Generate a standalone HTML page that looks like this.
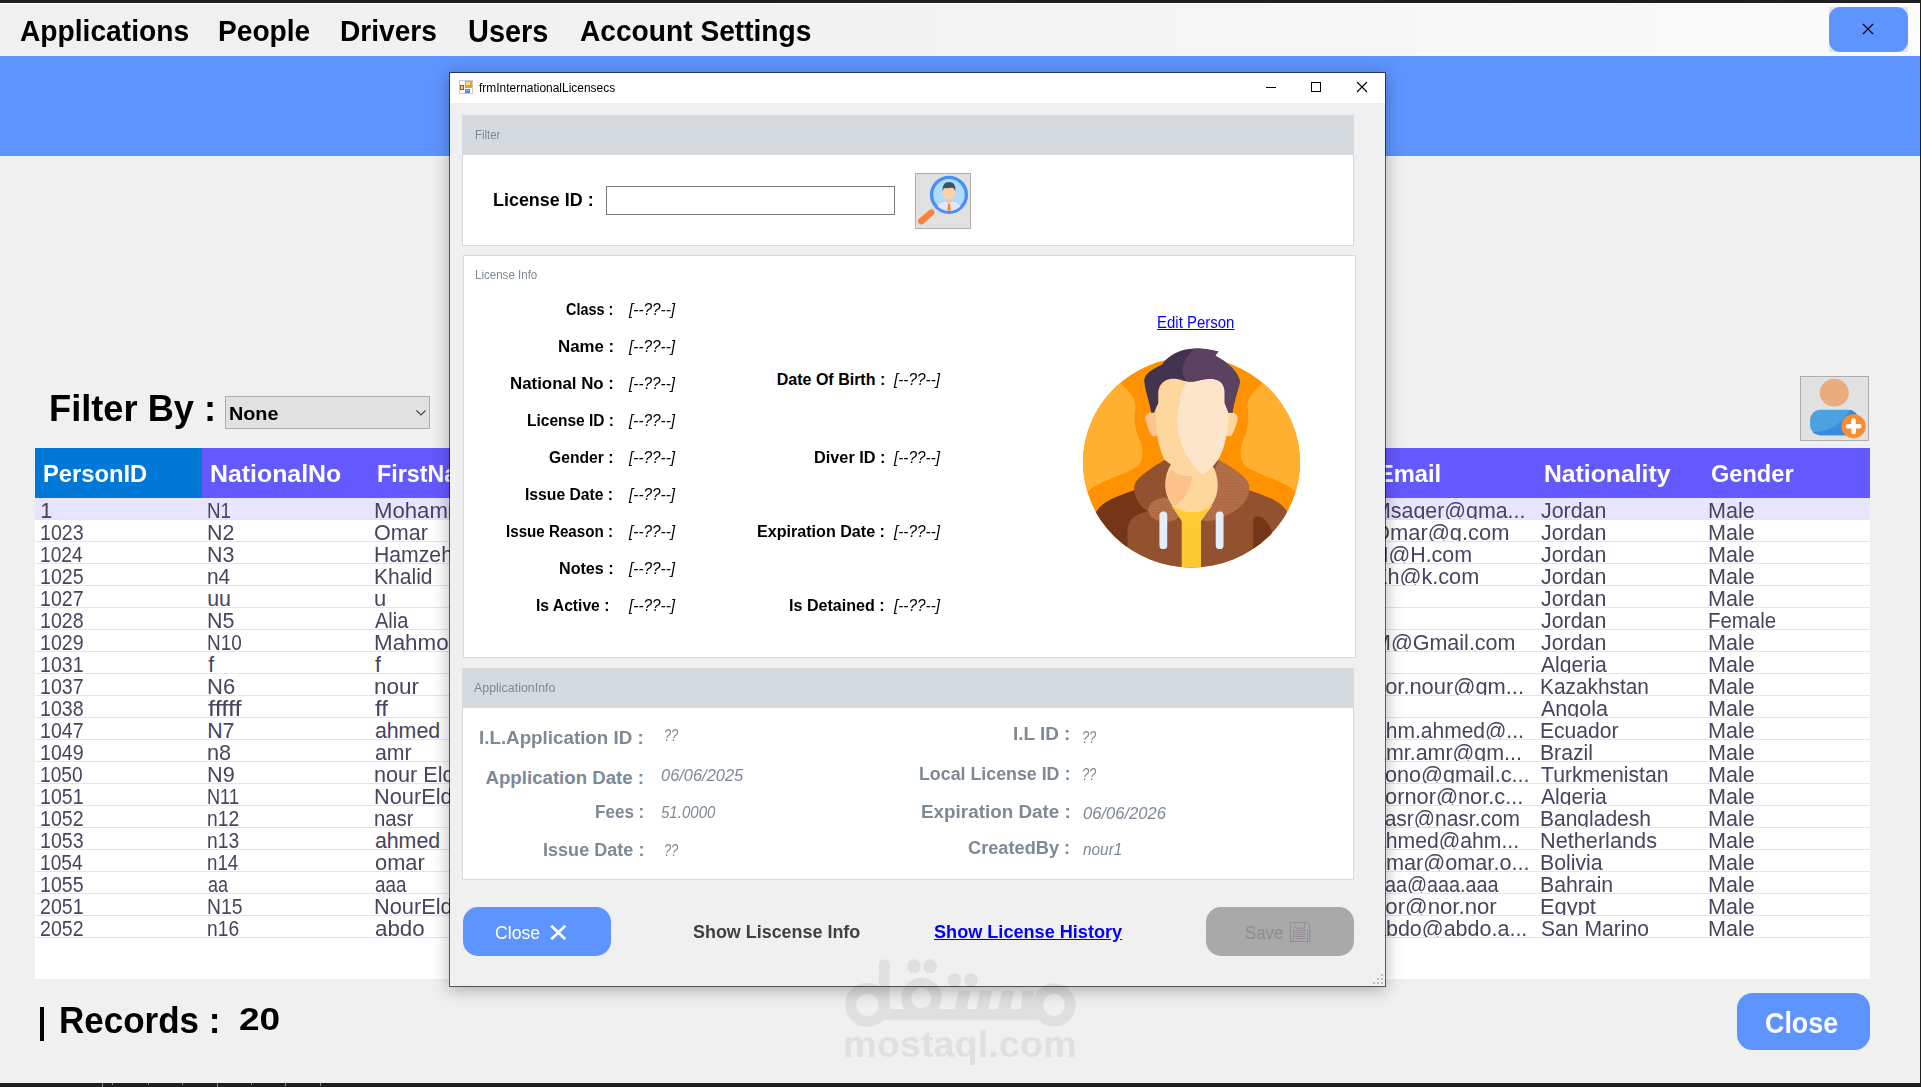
<!DOCTYPE html>
<html><head><meta charset="utf-8"><title>frmInternationalLicensecs</title>
<style>
html,body{margin:0;padding:0;}
body{width:1921px;height:1087px;overflow:hidden;position:relative;background:#f0f0f0;font-family:"Liberation Sans",sans-serif;}
.a{position:absolute;}
.t{position:absolute;white-space:pre;transform-origin:0 50%;}
.row{position:absolute;left:35px;width:1835px;height:22px;overflow:hidden;box-sizing:border-box;border-bottom:1px solid #e4e1fb;}
</style></head>
<body>
<!-- ===== main form ===== -->
<div class="a" style="left:0;top:0;width:1921px;height:3px;background:#1f1f1f"></div>
<div class="a" style="left:0;top:3px;width:1920px;height:53px;background:linear-gradient(90deg,#f0f0f0 0%,#f2f2f2 40%,#fbfbfb 100%);border-top:1px solid #fff;box-sizing:border-box"></div>
<div class="a" style="left:0;top:56px;width:1920px;height:100px;background:#5e94ff"></div>
<div class="a" style="left:1920px;top:0;width:1px;height:1087px;background:#1f1f1f"></div>
<div class="a" style="left:0;top:1083px;width:1921px;height:4px;background:#1f1f1f"></div>
<div class="a" style="left:102px;top:1083px;width:1px;height:4px;background:#8a8a8a"></div><div class="a" style="left:112px;top:1083px;width:1px;height:2px;background:#8a8a8a"></div><div class="a" style="left:148px;top:1083px;width:1px;height:2px;background:#8a8a8a"></div><div class="a" style="left:182px;top:1083px;width:1px;height:2px;background:#8a8a8a"></div><div class="a" style="left:217px;top:1083px;width:1px;height:4px;background:#8a8a8a"></div><div class="a" style="left:251px;top:1083px;width:1px;height:2px;background:#8a8a8a"></div><div class="a" style="left:285px;top:1083px;width:1px;height:3px;background:#8a8a8a"></div><div class="a" style="left:320px;top:1083px;width:1px;height:3px;background:#8a8a8a"></div>
<!-- top close button -->
<div class="a" style="left:1829px;top:7px;width:79px;height:45px;background:#e6e6e6"></div>
<div class="a" style="left:1829px;top:7px;width:79px;height:45px;background:#5e94ff;border-radius:11px"></div>
<svg class="a" style="left:1862px;top:23px" width="12" height="12" viewBox="0 0 12 12"><path d="M1 1 L11 11 M11 1 L1 11" stroke="#000" stroke-width="1.2" fill="none"/></svg>
<!-- combo -->
<div class="a" style="left:225px;top:396px;width:205px;height:33px;background:#e1e1e1;border:1px solid #adadad;box-sizing:border-box"></div>
<svg class="a" style="left:415px;top:409px" width="12" height="8" viewBox="0 0 12 8"><path d="M1.5 1.5 L6 6 L10.5 1.5" stroke="#444" stroke-width="1.2" fill="none"/></svg>
<!-- add person button -->
<div class="a" style="left:1800px;top:376px;width:69px;height:65px;background:#e1e1e1;border:1px solid #adadad;box-sizing:border-box"></div>
<svg class="a" style="left:1800px;top:376px" width="69" height="65" viewBox="1800 376 69 65">
<defs><clipPath id="bodyc"><rect x="1810.1" y="409.7" width="48.3" height="25.5" rx="10"/></clipPath></defs>
<ellipse cx="1834.3" cy="392.65" rx="14.6" ry="13.8" fill="#e9ad7d"/>
<rect x="1810.1" y="409.7" width="48.3" height="25.5" rx="10" fill="#4aa3df"/>
<path d="M1812 432 C1830 432 1845 422 1850 409 L1860 409 L1860 437 L1812 437 Z" fill="#3b8adb" clip-path="url(#bodyc)"/>
<circle cx="1853.6" cy="426.3" r="12.1" fill="#f98d34"/>
<path d="M1853.6 420.6 V432 M1847.9 426.3 H1859.3" stroke="#fff" stroke-width="4.6" stroke-linecap="round"/>
</svg>
<!-- grid -->
<div class="a" style="left:35px;top:448px;width:1835px;height:531px;background:#fff"></div>
<div class="a" style="left:35px;top:448px;width:1835px;height:50px;background:#6458ff"></div>
<div class="a" style="left:35px;top:448px;width:167px;height:50px;background:#0078d7"></div>
<div class="row" style="top:498px;background:#e7e5ff"><span class="t" style="left:5.20px;top:1.00px;font-size:21.33px;line-height:24px;color:#47455e;">1</span>
<span class="t" style="left:172.32px;top:1.00px;font-size:21.33px;line-height:24px;color:#47455e;transform:scaleX(0.8818);">N1</span>
<span class="t" style="left:338.86px;top:1.00px;font-size:21.33px;line-height:24px;color:#47455e;transform:scaleX(1.0393);">Mohammed</span>
<span class="t" style="left:1338.00px;top:1.00px;font-size:21.33px;line-height:24px;color:#47455e;transform:scaleX(1.0026);">Msaqer@gma...</span>
<span class="t" style="left:1506.30px;top:1.00px;font-size:21.33px;line-height:24px;color:#47455e;transform:scaleX(1.0023);">Jordan</span>
<span class="t" style="left:1672.99px;top:1.00px;font-size:21.33px;line-height:24px;color:#47455e;transform:scaleX(1.0098);">Male</span></div>
<div class="row" style="top:520px;background:#fff"><span class="t" style="left:5.28px;top:1.00px;font-size:21.33px;line-height:24px;color:#47455e;transform:scaleX(0.9170);">1023</span>
<span class="t" style="left:172.20px;top:1.00px;font-size:21.33px;line-height:24px;color:#47455e;transform:scaleX(1.0038);">N2</span>
<span class="t" style="left:338.89px;top:1.00px;font-size:21.33px;line-height:24px;color:#47455e;transform:scaleX(1.0111);">Omar</span>
<span class="t" style="left:1337.97px;top:1.00px;font-size:21.33px;line-height:24px;color:#47455e;transform:scaleX(1.0253);">Omar@g.com</span>
<span class="t" style="left:1506.30px;top:1.00px;font-size:21.33px;line-height:24px;color:#47455e;transform:scaleX(1.0023);">Jordan</span>
<span class="t" style="left:1672.99px;top:1.00px;font-size:21.33px;line-height:24px;color:#47455e;transform:scaleX(1.0098);">Male</span></div>
<div class="row" style="top:542px;background:#fff"><span class="t" style="left:5.30px;top:1.00px;font-size:21.33px;line-height:24px;color:#47455e;transform:scaleX(0.8973);">1024</span>
<span class="t" style="left:172.20px;top:1.00px;font-size:21.33px;line-height:24px;color:#47455e;transform:scaleX(1.0038);">N3</span>
<span class="t" style="left:338.91px;top:1.00px;font-size:21.33px;line-height:24px;color:#47455e;transform:scaleX(0.9941);">Hamzeh</span>
<span class="t" style="left:1338.00px;top:1.00px;font-size:21.33px;line-height:24px;color:#47455e;transform:scaleX(1.0041);">H@H.com</span>
<span class="t" style="left:1506.30px;top:1.00px;font-size:21.33px;line-height:24px;color:#47455e;transform:scaleX(1.0023);">Jordan</span>
<span class="t" style="left:1672.99px;top:1.00px;font-size:21.33px;line-height:24px;color:#47455e;transform:scaleX(1.0098);">Male</span></div>
<div class="row" style="top:564px;background:#fff"><span class="t" style="left:5.28px;top:1.00px;font-size:21.33px;line-height:24px;color:#47455e;transform:scaleX(0.9170);">1025</span>
<span class="t" style="left:172.22px;top:1.00px;font-size:21.33px;line-height:24px;color:#47455e;transform:scaleX(0.9798);">n4</span>
<span class="t" style="left:338.91px;top:1.00px;font-size:21.33px;line-height:24px;color:#47455e;transform:scaleX(0.9874);">Khalid</span>
<span class="t" style="left:1337.98px;top:1.00px;font-size:21.33px;line-height:24px;color:#47455e;transform:scaleX(1.0150);">Kh@k.com</span>
<span class="t" style="left:1506.30px;top:1.00px;font-size:21.33px;line-height:24px;color:#47455e;transform:scaleX(1.0023);">Jordan</span>
<span class="t" style="left:1672.99px;top:1.00px;font-size:21.33px;line-height:24px;color:#47455e;transform:scaleX(1.0098);">Male</span></div>
<div class="row" style="top:586px;background:#fff"><span class="t" style="left:5.28px;top:1.00px;font-size:21.33px;line-height:24px;color:#47455e;transform:scaleX(0.9170);">1027</span>
<span class="t" style="left:172.20px;top:1.00px;font-size:21.33px;line-height:24px;color:#47455e;">uu</span>
<span class="t" style="left:338.87px;top:1.00px;font-size:21.33px;line-height:24px;color:#47455e;transform:scaleX(1.0300);">u</span>
<span class="t" style="left:1506.30px;top:1.00px;font-size:21.33px;line-height:24px;color:#47455e;transform:scaleX(1.0023);">Jordan</span>
<span class="t" style="left:1672.99px;top:1.00px;font-size:21.33px;line-height:24px;color:#47455e;transform:scaleX(1.0098);">Male</span></div>
<div class="row" style="top:608px;background:#fff"><span class="t" style="left:5.28px;top:1.00px;font-size:21.33px;line-height:24px;color:#47455e;transform:scaleX(0.9170);">1028</span>
<span class="t" style="left:172.20px;top:1.00px;font-size:21.33px;line-height:24px;color:#47455e;transform:scaleX(1.0038);">N5</span>
<span class="t" style="left:339.90px;top:1.00px;font-size:21.33px;line-height:24px;color:#47455e;transform:scaleX(0.9383);">Alia</span>
<span class="t" style="left:1506.30px;top:1.00px;font-size:21.33px;line-height:24px;color:#47455e;transform:scaleX(1.0023);">Jordan</span>
<span class="t" style="left:1673.04px;top:1.00px;font-size:21.33px;line-height:24px;color:#47455e;transform:scaleX(0.9573);">Female</span></div>
<div class="row" style="top:630px;background:#fff"><span class="t" style="left:5.28px;top:1.00px;font-size:21.33px;line-height:24px;color:#47455e;transform:scaleX(0.9170);">1029</span>
<span class="t" style="left:172.31px;top:1.00px;font-size:21.33px;line-height:24px;color:#47455e;transform:scaleX(0.8886);">N10</span>
<span class="t" style="left:338.85px;top:1.00px;font-size:21.33px;line-height:24px;color:#47455e;transform:scaleX(1.0486);">Mahmoud</span>
<span class="t" style="left:1337.99px;top:1.00px;font-size:21.33px;line-height:24px;color:#47455e;transform:scaleX(1.0081);">M@Gmail.com</span>
<span class="t" style="left:1506.30px;top:1.00px;font-size:21.33px;line-height:24px;color:#47455e;transform:scaleX(1.0023);">Jordan</span>
<span class="t" style="left:1672.99px;top:1.00px;font-size:21.33px;line-height:24px;color:#47455e;transform:scaleX(1.0098);">Male</span></div>
<div class="row" style="top:652px;background:#fff"><span class="t" style="left:5.28px;top:1.00px;font-size:21.33px;line-height:24px;color:#47455e;transform:scaleX(0.9170);">1031</span>
<span class="t" style="left:173.20px;top:1.00px;font-size:21.33px;line-height:24px;color:#47455e;">f</span>
<span class="t" style="left:339.90px;top:1.00px;font-size:21.33px;line-height:24px;color:#47455e;">f</span>
<span class="t" style="left:1506.30px;top:1.00px;font-size:21.33px;line-height:24px;color:#47455e;transform:scaleX(0.9921);">Algeria</span>
<span class="t" style="left:1672.99px;top:1.00px;font-size:21.33px;line-height:24px;color:#47455e;transform:scaleX(1.0098);">Male</span></div>
<div class="row" style="top:674px;background:#fff"><span class="t" style="left:5.28px;top:1.00px;font-size:21.33px;line-height:24px;color:#47455e;transform:scaleX(0.9170);">1037</span>
<span class="t" style="left:172.16px;top:1.00px;font-size:21.33px;line-height:24px;color:#47455e;transform:scaleX(1.0353);">N6</span>
<span class="t" style="left:338.84px;top:1.00px;font-size:21.33px;line-height:24px;color:#47455e;transform:scaleX(1.0557);">nour</span>
<span class="t" style="left:1337.98px;top:1.00px;font-size:21.33px;line-height:24px;color:#47455e;transform:scaleX(1.0250);">nor.nour@gm...</span>
<span class="t" style="left:1505.32px;top:1.00px;font-size:21.33px;line-height:24px;color:#47455e;transform:scaleX(0.9773);">Kazakhstan</span>
<span class="t" style="left:1672.99px;top:1.00px;font-size:21.33px;line-height:24px;color:#47455e;transform:scaleX(1.0098);">Male</span></div>
<div class="row" style="top:696px;background:#fff"><span class="t" style="left:5.28px;top:1.00px;font-size:21.33px;line-height:24px;color:#47455e;transform:scaleX(0.9170);">1038</span>
<span class="t" style="left:173.20px;top:1.00px;font-size:21.33px;line-height:24px;color:#47455e;transform:scaleX(1.1967);">fffff</span>
<span class="t" style="left:339.90px;top:1.00px;font-size:21.33px;line-height:24px;color:#47455e;transform:scaleX(1.1265);">ff</span>
<span class="t" style="left:1506.30px;top:1.00px;font-size:21.33px;line-height:24px;color:#47455e;transform:scaleX(1.0098);">Angola</span>
<span class="t" style="left:1672.99px;top:1.00px;font-size:21.33px;line-height:24px;color:#47455e;transform:scaleX(1.0098);">Male</span></div>
<div class="row" style="top:718px;background:#fff"><span class="t" style="left:5.28px;top:1.00px;font-size:21.33px;line-height:24px;color:#47455e;transform:scaleX(0.9170);">1047</span>
<span class="t" style="left:172.20px;top:1.00px;font-size:21.33px;line-height:24px;color:#47455e;">N7</span>
<span class="t" style="left:339.90px;top:1.00px;font-size:21.33px;line-height:24px;color:#47455e;">ahmed</span>
<span class="t" style="left:1339.00px;top:1.00px;font-size:21.33px;line-height:24px;color:#47455e;transform:scaleX(0.9858);">ahm.ahmed@...</span>
<span class="t" style="left:1505.31px;top:1.00px;font-size:21.33px;line-height:24px;color:#47455e;transform:scaleX(0.9893);">Ecuador</span>
<span class="t" style="left:1672.99px;top:1.00px;font-size:21.33px;line-height:24px;color:#47455e;transform:scaleX(1.0098);">Male</span></div>
<div class="row" style="top:740px;background:#fff"><span class="t" style="left:5.28px;top:1.00px;font-size:21.33px;line-height:24px;color:#47455e;transform:scaleX(0.9170);">1049</span>
<span class="t" style="left:172.18px;top:1.00px;font-size:21.33px;line-height:24px;color:#47455e;transform:scaleX(1.0155);">n8</span>
<span class="t" style="left:339.90px;top:1.00px;font-size:21.33px;line-height:24px;color:#47455e;transform:scaleX(0.9965);">amr</span>
<span class="t" style="left:1339.00px;top:1.00px;font-size:21.33px;line-height:24px;color:#47455e;transform:scaleX(1.0045);">amr.amr@gm...</span>
<span class="t" style="left:1505.31px;top:1.00px;font-size:21.33px;line-height:24px;color:#47455e;transform:scaleX(0.9924);">Brazil</span>
<span class="t" style="left:1672.99px;top:1.00px;font-size:21.33px;line-height:24px;color:#47455e;transform:scaleX(1.0098);">Male</span></div>
<div class="row" style="top:762px;background:#fff"><span class="t" style="left:5.30px;top:1.00px;font-size:21.33px;line-height:24px;color:#47455e;transform:scaleX(0.8973);">1050</span>
<span class="t" style="left:172.18px;top:1.00px;font-size:21.33px;line-height:24px;color:#47455e;transform:scaleX(1.0156);">N9</span>
<span class="t" style="left:338.88px;top:1.00px;font-size:21.33px;line-height:24px;color:#47455e;transform:scaleX(1.0151);">nour Eldin</span>
<span class="t" style="left:1337.99px;top:1.00px;font-size:21.33px;line-height:24px;color:#47455e;transform:scaleX(1.0132);">nono@gmail.c...</span>
<span class="t" style="left:1506.30px;top:1.00px;font-size:21.33px;line-height:24px;color:#47455e;transform:scaleX(0.9934);">Turkmenistan</span>
<span class="t" style="left:1672.99px;top:1.00px;font-size:21.33px;line-height:24px;color:#47455e;transform:scaleX(1.0098);">Male</span></div>
<div class="row" style="top:784px;background:#fff"><span class="t" style="left:5.28px;top:1.00px;font-size:21.33px;line-height:24px;color:#47455e;transform:scaleX(0.9170);">1051</span>
<span class="t" style="left:172.35px;top:1.00px;font-size:21.33px;line-height:24px;color:#47455e;transform:scaleX(0.8520);">N11</span>
<span class="t" style="left:338.88px;top:1.00px;font-size:21.33px;line-height:24px;color:#47455e;transform:scaleX(1.0208);">NourEldin</span>
<span class="t" style="left:1337.98px;top:1.00px;font-size:21.33px;line-height:24px;color:#47455e;transform:scaleX(1.0201);">nornor@nor.c...</span>
<span class="t" style="left:1506.30px;top:1.00px;font-size:21.33px;line-height:24px;color:#47455e;transform:scaleX(0.9921);">Algeria</span>
<span class="t" style="left:1672.99px;top:1.00px;font-size:21.33px;line-height:24px;color:#47455e;transform:scaleX(1.0098);">Male</span></div>
<div class="row" style="top:806px;background:#fff"><span class="t" style="left:5.28px;top:1.00px;font-size:21.33px;line-height:24px;color:#47455e;transform:scaleX(0.9170);">1052</span>
<span class="t" style="left:172.30px;top:1.00px;font-size:21.33px;line-height:24px;color:#47455e;transform:scaleX(0.9015);">n12</span>
<span class="t" style="left:338.95px;top:1.00px;font-size:21.33px;line-height:24px;color:#47455e;transform:scaleX(0.9533);">nasr</span>
<span class="t" style="left:1338.02px;top:1.00px;font-size:21.33px;line-height:24px;color:#47455e;transform:scaleX(0.9824);">nasr@nasr.com</span>
<span class="t" style="left:1505.32px;top:1.00px;font-size:21.33px;line-height:24px;color:#47455e;transform:scaleX(0.9847);">Bangladesh</span>
<span class="t" style="left:1672.99px;top:1.00px;font-size:21.33px;line-height:24px;color:#47455e;transform:scaleX(1.0098);">Male</span></div>
<div class="row" style="top:828px;background:#fff"><span class="t" style="left:5.28px;top:1.00px;font-size:21.33px;line-height:24px;color:#47455e;transform:scaleX(0.9170);">1053</span>
<span class="t" style="left:172.30px;top:1.00px;font-size:21.33px;line-height:24px;color:#47455e;transform:scaleX(0.9015);">n13</span>
<span class="t" style="left:339.90px;top:1.00px;font-size:21.33px;line-height:24px;color:#47455e;">ahmed</span>
<span class="t" style="left:1339.00px;top:1.00px;font-size:21.33px;line-height:24px;color:#47455e;transform:scaleX(0.9930);">ahmed@ahm...</span>
<span class="t" style="left:1505.28px;top:1.00px;font-size:21.33px;line-height:24px;color:#47455e;transform:scaleX(1.0173);">Netherlands</span>
<span class="t" style="left:1672.99px;top:1.00px;font-size:21.33px;line-height:24px;color:#47455e;transform:scaleX(1.0098);">Male</span></div>
<div class="row" style="top:850px;background:#fff"><span class="t" style="left:5.30px;top:1.00px;font-size:21.33px;line-height:24px;color:#47455e;transform:scaleX(0.8973);">1054</span>
<span class="t" style="left:172.32px;top:1.00px;font-size:21.33px;line-height:24px;color:#47455e;transform:scaleX(0.8755);">n14</span>
<span class="t" style="left:339.90px;top:1.00px;font-size:21.33px;line-height:24px;color:#47455e;transform:scaleX(1.0229);">omar</span>
<span class="t" style="left:1339.00px;top:1.00px;font-size:21.33px;line-height:24px;color:#47455e;transform:scaleX(1.0146);">omar@omar.o...</span>
<span class="t" style="left:1505.30px;top:1.00px;font-size:21.33px;line-height:24px;color:#47455e;transform:scaleX(0.9973);">Bolivia</span>
<span class="t" style="left:1672.99px;top:1.00px;font-size:21.33px;line-height:24px;color:#47455e;transform:scaleX(1.0098);">Male</span></div>
<div class="row" style="top:872px;background:#fff"><span class="t" style="left:5.28px;top:1.00px;font-size:21.33px;line-height:24px;color:#47455e;transform:scaleX(0.9170);">1055</span>
<span class="t" style="left:173.20px;top:1.00px;font-size:21.33px;line-height:24px;color:#47455e;transform:scaleX(0.8424);">aa</span>
<span class="t" style="left:339.90px;top:1.00px;font-size:21.33px;line-height:24px;color:#47455e;transform:scaleX(0.8818);">aaa</span>
<span class="t" style="left:1339.00px;top:1.00px;font-size:21.33px;line-height:24px;color:#47455e;transform:scaleX(0.9273);">aaa@aaa.aaa</span>
<span class="t" style="left:1505.30px;top:1.00px;font-size:21.33px;line-height:24px;color:#47455e;transform:scaleX(0.9951);">Bahrain</span>
<span class="t" style="left:1672.99px;top:1.00px;font-size:21.33px;line-height:24px;color:#47455e;transform:scaleX(1.0098);">Male</span></div>
<div class="row" style="top:894px;background:#fff"><span class="t" style="left:5.28px;top:1.00px;font-size:21.33px;line-height:24px;color:#47455e;transform:scaleX(0.9170);">2051</span>
<span class="t" style="left:172.30px;top:1.00px;font-size:21.33px;line-height:24px;color:#47455e;transform:scaleX(0.9044);">N15</span>
<span class="t" style="left:338.88px;top:1.00px;font-size:21.33px;line-height:24px;color:#47455e;transform:scaleX(1.0208);">NourEldin</span>
<span class="t" style="left:1337.96px;top:1.00px;font-size:21.33px;line-height:24px;color:#47455e;transform:scaleX(1.0410);">nor@nor.nor</span>
<span class="t" style="left:1505.28px;top:1.00px;font-size:21.33px;line-height:24px;color:#47455e;transform:scaleX(1.0240);">Egypt</span>
<span class="t" style="left:1672.99px;top:1.00px;font-size:21.33px;line-height:24px;color:#47455e;transform:scaleX(1.0098);">Male</span></div>
<div class="row" style="top:916px;background:#fff"><span class="t" style="left:5.28px;top:1.00px;font-size:21.33px;line-height:24px;color:#47455e;transform:scaleX(0.9170);">2052</span>
<span class="t" style="left:172.30px;top:1.00px;font-size:21.33px;line-height:24px;color:#47455e;transform:scaleX(0.9015);">n16</span>
<span class="t" style="left:339.90px;top:1.00px;font-size:21.33px;line-height:24px;color:#47455e;transform:scaleX(1.0475);">abdo</span>
<span class="t" style="left:1339.00px;top:1.00px;font-size:21.33px;line-height:24px;color:#47455e;transform:scaleX(1.0081);">abdo@abdo.a...</span>
<span class="t" style="left:1506.30px;top:1.00px;font-size:21.33px;line-height:24px;color:#47455e;transform:scaleX(0.9898);">San Marino</span>
<span class="t" style="left:1672.99px;top:1.00px;font-size:21.33px;line-height:24px;color:#47455e;transform:scaleX(1.0098);">Male</span></div>

<!-- bottom close -->
<div class="a" style="left:1737.4px;top:993.4px;width:132.2px;height:56.2px;background:#5e94ff;border-radius:15.5px"></div>
<div class="a" style="left:40.4px;top:1007.3px;width:3.5px;height:33.7px;background:#000"></div>
<span class="t" style="left:19.50px;top:14.00px;font-size:29.33px;line-height:33px;color:#000;font-weight:bold;transform:scaleX(0.9609);">Applications</span>
<span class="t" style="left:218.44px;top:14.00px;font-size:29.33px;line-height:33px;color:#000;font-weight:bold;transform:scaleX(0.9594);">People</span>
<span class="t" style="left:340.34px;top:14.00px;font-size:29.33px;line-height:33px;color:#000;font-weight:bold;transform:scaleX(0.9591);">Drivers</span>
<span class="t" style="left:580.30px;top:14.00px;font-size:29.33px;line-height:33px;color:#000;font-weight:bold;transform:scaleX(0.9595);">Account Settings</span>
<span class="t" style="left:468.48px;top:13.00px;font-size:31.5px;line-height:36px;color:#000;font-weight:bold;transform:scaleX(0.9181);">Users</span>
<span class="t" style="left:48.86px;top:387.00px;font-size:37.33px;line-height:42px;color:#000;font-weight:bold;transform:scaleX(0.9705);">Filter By :</span>
<span class="t" style="left:228.74px;top:403.00px;font-size:18.67px;line-height:21px;color:#000;font-weight:bold;transform:scaleX(1.0604);">None</span>
<span class="t" style="left:59.03px;top:999.00px;font-size:37.33px;line-height:42px;color:#000;font-weight:bold;transform:scaleX(0.9374);">Records :</span>
<span class="t" style="left:239.44px;top:1001.00px;font-size:32px;line-height:36px;color:#000;font-weight:bold;transform:scaleX(1.1569);">20</span>
<span class="t" style="left:1764.68px;top:1006.00px;font-size:29.33px;line-height:33px;color:#fff;font-weight:bold;transform:scaleX(0.9153);">Close</span>
<span class="t" style="left:43.27px;top:461.00px;font-size:23px;line-height:26px;color:#fff;font-weight:bold;transform:scaleX(1.0326);">PersonID</span>
<span class="t" style="left:210.22px;top:461.00px;font-size:23px;line-height:26px;color:#fff;font-weight:bold;transform:scaleX(1.0811);">NationalNo</span>
<span class="t" style="left:376.99px;top:461.00px;font-size:23px;line-height:26px;color:#fff;font-weight:bold;transform:scaleX(1.0118);">FirstName</span>
<span class="t" style="left:1377.97px;top:461.00px;font-size:23px;line-height:26px;color:#fff;font-weight:bold;transform:scaleX(1.0293);">Email</span>
<span class="t" style="left:1543.92px;top:461.00px;font-size:23px;line-height:26px;color:#fff;font-weight:bold;transform:scaleX(1.0755);">Nationality</span>
<span class="t" style="left:1711.40px;top:461.00px;font-size:23px;line-height:26px;color:#fff;font-weight:bold;transform:scaleX(1.0252);">Gender</span>

<!-- ===== dialog ===== -->
<div class="a" id="dlg" style="left:449px;top:72px;width:937px;height:915px;box-sizing:border-box;border:1px solid rgba(0,0,0,0.58);background:#f0f0f0;background-clip:padding-box;box-shadow:0 3px 16px 0 rgba(0,0,0,0.29)"></div>
<div class="a" style="left:450px;top:73px;width:935px;height:30px;background:#fff"></div>
<!-- title icon -->
<svg class="a" style="left:459px;top:80px" width="14" height="14" viewBox="0 0 14 14">
<rect x="0.5" y="0.5" width="13" height="13" fill="#fff" stroke="#c8c8c8"/>
<rect x="1" y="5" width="4" height="5" fill="#b5540b"/><rect x="2" y="6" width="2" height="3" fill="#f4c58a"/>
<rect x="6" y="1" width="7" height="7" fill="#f0a020"/><rect x="7" y="2" width="4" height="3" fill="#fbe3a0"/>
<rect x="6" y="9" width="5" height="4" fill="#4f86d8"/><rect x="7" y="10" width="3" height="1" fill="#9cc0f0"/>
</svg>
<!-- window buttons -->
<svg class="a" style="left:1260px;top:76px" width="115" height="24" viewBox="1260 76 115 24">
<path d="M1266 87.5 H1276" stroke="#000" stroke-width="1"/>
<rect x="1311.5" y="82.5" width="9" height="9" fill="none" stroke="#000" stroke-width="1"/>
<path d="M1357 82 L1367 92 M1367 82 L1357 92" stroke="#000" stroke-width="1.1"/>
</svg>
<!-- filter group -->
<div class="a" style="left:462px;top:115px;width:892px;height:131px;box-sizing:border-box;border:1px solid #d5dadf;background:#fff"></div>
<div class="a" style="left:462px;top:115px;width:892px;height:40px;background:#d5dadf"></div>
<div class="a" style="left:606px;top:186px;width:289px;height:29px;box-sizing:border-box;border:1px solid #7a7a7a;background:#fff"></div>
<!-- search button -->
<div class="a" style="left:915px;top:173px;width:56px;height:56px;box-sizing:border-box;border:1px solid #adadad;background:#e1e1e1"></div>
<svg class="a" style="left:915px;top:173px" width="56" height="56" viewBox="915 173 56 56">
<defs><clipPath id="lens"><circle cx="949" cy="194.8" r="16.2"/></clipPath></defs>
<path d="M935.5 207.5 L932 210.5" stroke="#cdd6e2" stroke-width="3.2"/>
<path d="M931.2 212.6 L921.2 221.2" stroke="#f5843c" stroke-width="6.4" stroke-linecap="round"/>
<circle cx="949" cy="194.8" r="17.4" fill="#aedcff" stroke="#4c8ef7" stroke-width="3.4"/>
<g clip-path="url(#lens)">
<path d="M936.5 212 C936.5 204.5 941 202.3 946 201.6 L949 203.5 L952 201.6 C957 202.3 961.5 204.5 961.5 212 Z" fill="#e6e6fa"/>
<path d="M946.3 197 H951.7 V202 L949 204 L946.3 202 Z" fill="#f9c595"/>
<path d="M948 203.8 H950 L950.7 210.8 H947.3 Z" fill="#f5843c"/>
<ellipse cx="949" cy="192.5" rx="5.9" ry="7" fill="#fbd2a6"/>
<circle cx="942.9" cy="192.7" r="1.2" fill="#fbd2a6"/><circle cx="955.1" cy="192.7" r="1.2" fill="#fbd2a6"/>
<path d="M942.6 191.5 C942 185 945 181.9 949 181.9 C953.5 181.9 956 185 955.4 191.5 C954.5 189 953.5 187.8 951.5 187.8 C949 188.2 946 188.4 944 188 C943.3 189 943 190 942.6 191.5 Z" fill="#3e5367"/>
</g></svg>

<!-- license info group -->
<div class="a" style="left:463px;top:255px;width:893px;height:403px;box-sizing:border-box;border:1px solid #d5dadf;background:#fff"></div>
<svg class="a" style="left:1070px;top:335px" width="240" height="250" viewBox="0 0 1044 1087">
<defs>
<clipPath id="avc"><ellipse cx="528.5" cy="553.5" rx="472" ry="458"/></clipPath>
<pattern id="dots1" width="14" height="14" patternUnits="userSpaceOnUse"><circle cx="4" cy="4" r="2.6" fill="#f59a3a"/><circle cx="11" cy="11" r="2.6" fill="#f59a3a"/></pattern>
<pattern id="dots2" width="14" height="14" patternUnits="userSpaceOnUse"><circle cx="4" cy="4" r="2.4" fill="#fbb27a"/><circle cx="11" cy="11" r="2.4" fill="#fbb27a"/></pattern>
<pattern id="dots3" width="12" height="12" patternUnits="userSpaceOnUse"><circle cx="3" cy="3" r="2.2" fill="#fbb830"/><circle cx="9" cy="9" r="2.2" fill="#fbb830"/></pattern>
</defs>
<g clip-path="url(#avc)">
<rect x="40" y="80" width="980" height="950" fill="#ff9201"/>
<!-- light blobs -->
<path d="M215 205 C250 240 290 270 285 320 C275 370 285 420 305 460 C325 510 320 560 270 585 C200 620 120 640 70 685 L20 685 L20 205 Z" fill="#ffb030"/>
<path d="M842 205 C807 240 767 270 772 320 C782 370 772 420 752 460 C732 510 737 560 787 585 C857 620 937 640 987 685 L1037 685 L1037 205 Z" fill="#ffb030"/>
<!-- jacket base -->
<path d="M100 800 C120 740 160 715 280 675 C275 640 300 610 410 545 L650 545 C760 610 785 640 778 675 C900 715 935 735 960 800 L960 1040 L100 1040 Z" fill="#92512f"/>
<!-- dark left shoulder -->
<path d="M100 800 C120 740 160 715 280 675 C282 715 305 745 340 768 C290 775 252 800 250 850 L250 1040 L100 1040 Z" fill="#753617"/>
<!-- dark right patch -->
<path d="M797 810 C797 785 825 780 845 800 C870 825 880 850 880 875 L880 1040 L797 1040 Z" fill="#753617"/>
<!-- hood inner (dotted) -->
<path d="M648 545 C760 610 785 640 778 678 C775 730 720 775 640 800 C600 815 575 815 575 790 L575 700 Z" fill="#a5654a"/>
<path d="M648 545 C760 610 785 640 778 678 C775 730 720 775 640 800 C600 815 575 815 575 790 L575 700 Z" fill="url(#dots1)" opacity="0.75"/>
<ellipse cx="415" cy="760" rx="75" ry="52" fill="#a5654a"/>
<ellipse cx="415" cy="760" rx="75" ry="52" fill="url(#dots1)" opacity="0.75"/>
<!-- shirt -->
<path d="M440 740 L620 740 L570 810 L570 1040 L486 1040 L486 810 Z" fill="#fecb34"/>
<rect x="486" y="840" width="84" height="200" fill="url(#dots3)" opacity="0.8"/>
<!-- drawstrings -->
<rect x="389" y="767" width="34" height="164" rx="17" fill="#e3eefb"/>
<rect x="634" y="767" width="34" height="164" rx="17" fill="#e3eefb"/>
</g>
<!-- neck -->
<path d="M440 560 C405 620 405 690 445 740 C490 780 570 780 610 745 C650 700 655 620 615 560 Z" fill="#fed79f"/>
<path d="M438 585 C470 610 500 615 530 612 C530 660 500 720 455 742 C410 700 405 640 438 585 Z" fill="#fcc48e"/>
<path d="M438 585 C470 610 500 615 530 612 C530 660 500 720 455 742 C410 700 405 640 438 585 Z" fill="url(#dots2)" opacity="0.8"/>
<!-- ears -->
<path d="M 373.1 336.8 C 350.7 331.2 323.8 341.3 328.3 366.5 C 333.9 391.7 342.3 414.1 350.7 431.0 C 359.1 443.3 375.9 441.1 381.5 435.4 Z" fill="#fcc793"/>
<path d="M 373.1 336.8 C 350.7 331.2 323.8 341.3 328.3 366.5 C 333.9 391.7 342.3 414.1 350.7 431.0 C 359.1 443.3 375.9 441.1 381.5 435.4 Z" fill="url(#dots2)" opacity="0.7"/>
<path d="M 684.2 336.8 C 706.7 331.2 733.6 341.3 729.1 366.5 C 723.5 391.7 715.1 414.1 706.7 431.0 C 698.2 443.3 681.4 441.1 675.8 435.4 Z" fill="#fed79f"/>
<!-- face left (darker) -->
<path d="M372 330 C372 260 385 190 450 188 L640 188 C680 195 690 260 690 330 C690 420 670 500 640 545 C615 580 590 600 575 605 C520 600 450 580 410 540 C385 490 372 420 372 330 Z" fill="#fed79f"/>
<!-- face right (lighter) -->
<path d="M520 195 C485 230 480 260 478 300 C455 350 470 440 490 490 C515 545 550 585 575 605 C600 595 625 570 645 540 C675 490 690 410 690 330 C690 260 680 200 640 190 Z" fill="#fde5cc"/>
<!-- hair dark -->
<path d="M353 337 C345 285 325 240 323 197 C325 165 360 150 400 128 C430 85 480 60 540 58 C590 58 620 65 645 72 L632 90 C690 120 730 160 740 203 C728 250 712 290 707 337 L690 338 L673 296 L673 240 C668 212 655 200 640 195 C615 186 590 190 560 198 C540 204 510 204 490 198 C470 190 450 188 430 192 C400 200 386 220 384 250 L384 296 L365 338 Z" fill="#42334e"/>
<!-- hair light -->
<path d="M545 58 C590 58 620 65 645 72 L632 90 C690 120 730 160 740 203 C728 250 712 290 707 337 L690 338 L673 296 L673 240 C668 212 655 200 640 195 C615 186 590 190 560 198 C540 204 520 204 510 202 C490 185 485 150 495 125 C505 95 520 75 545 58 Z" fill="#5a4260"/>
</svg>

<!-- app info group -->
<div class="a" style="left:462px;top:668px;width:892px;height:212px;box-sizing:border-box;border:1px solid #d5dadf;background:#fff"></div>
<div class="a" style="left:462px;top:668px;width:892px;height:40px;background:#d5dadf"></div>
<!-- buttons -->
<div class="a" style="left:462.5px;top:906.5px;width:148px;height:49px;background:#5e94ff;border-radius:15px"></div>
<svg class="a" style="left:548px;top:922px" width="21" height="21" viewBox="548 922 21 21"><path d="M551.3 925.7 L565.3 939.2 M565.3 925.7 L551.3 939.2" stroke="#fff" stroke-width="2.6" stroke-linecap="butt"/></svg>
<div class="a" style="left:1206px;top:906.5px;width:148px;height:49px;background:#a9a9a9;border-radius:15px"></div>
<svg class="a" style="left:1288px;top:920px" width="26" height="26" viewBox="1288 920 26 26">
<g fill="none" stroke="#988d98" stroke-width="1">
<path d="M1290.5 922.5 H1307.5 L1309.8 924.8 V941.5 H1290.5 Z" stroke-width="1.2"/>
<path d="M1293.5 941.5 V930.5 H1307.5 V941.5"/>
<path d="M1295 932.5 H1305 M1295 934.5 H1306 M1295 936.5 H1305 M1295 938.5 H1306"/>
<path d="M1294.5 923 V926 L1296.5 928.3 H1304.5 V923"/>
</g></svg>

<svg class="a" style="left:1372px;top:973px" width="12" height="12" viewBox="0 0 12 12"><g fill="#bfbfbf"><rect x="9" y="1" width="2" height="2"/><rect x="5" y="5" width="2" height="2"/><rect x="9" y="5" width="2" height="2"/><rect x="1" y="9" width="2" height="2"/><rect x="5" y="9" width="2" height="2"/><rect x="9" y="9" width="2" height="2"/></g></svg>
<span class="t" style="left:478.90px;top:81.00px;font-size:12px;line-height:14px;color:#000;transform:scaleX(0.9954);">frmInternationalLicensecs</span>
<span class="t" style="left:474.70px;top:128.00px;font-size:12px;line-height:14px;color:#7d8995;transform:scaleX(0.9486);">Filter</span>
<span class="t" style="left:493.44px;top:189.00px;font-size:18.67px;line-height:21px;color:#000;font-weight:bold;transform:scaleX(0.9610);">License ID :</span>
<span class="t" style="left:475.40px;top:268.00px;font-size:12px;line-height:14px;color:#7d8995;transform:scaleX(0.9625);">License Info</span>
<span class="t" style="left:566.20px;top:301.00px;font-size:16px;line-height:17px;color:#000;font-weight:bold;transform:scaleX(0.8995);">Class :</span>
<span class="t" style="left:629.36px;top:301.00px;font-size:16px;line-height:17px;color:#000;font-style:italic;transform:scaleX(0.9606);">[--??--]</span>
<span class="t" style="left:557.55px;top:338.00px;font-size:16px;line-height:17px;color:#000;font-weight:bold;transform:scaleX(1.0505);">Name :</span>
<span class="t" style="left:629.36px;top:338.00px;font-size:16px;line-height:17px;color:#000;font-style:italic;transform:scaleX(0.9606);">[--??--]</span>
<span class="t" style="left:509.65px;top:375.00px;font-size:16px;line-height:17px;color:#000;font-weight:bold;transform:scaleX(1.0536);">National No :</span>
<span class="t" style="left:629.36px;top:375.00px;font-size:16px;line-height:17px;color:#000;font-style:italic;transform:scaleX(0.9606);">[--??--]</span>
<span class="t" style="left:526.53px;top:412.00px;font-size:16px;line-height:17px;color:#000;font-weight:bold;transform:scaleX(0.9683);">License ID :</span>
<span class="t" style="left:629.36px;top:412.00px;font-size:16px;line-height:17px;color:#000;font-style:italic;transform:scaleX(0.9606);">[--??--]</span>
<span class="t" style="left:549.10px;top:449.00px;font-size:16px;line-height:17px;color:#000;font-weight:bold;transform:scaleX(0.9789);">Gender :</span>
<span class="t" style="left:629.36px;top:449.00px;font-size:16px;line-height:17px;color:#000;font-style:italic;transform:scaleX(0.9606);">[--??--]</span>
<span class="t" style="left:525.42px;top:486.00px;font-size:16px;line-height:17px;color:#000;font-weight:bold;transform:scaleX(0.9807);">Issue Date :</span>
<span class="t" style="left:629.36px;top:486.00px;font-size:16px;line-height:17px;color:#000;font-style:italic;transform:scaleX(0.9606);">[--??--]</span>
<span class="t" style="left:506.45px;top:523.00px;font-size:16px;line-height:17px;color:#000;font-weight:bold;transform:scaleX(0.9475);">Issue Reason :</span>
<span class="t" style="left:629.36px;top:523.00px;font-size:16px;line-height:17px;color:#000;font-style:italic;transform:scaleX(0.9606);">[--??--]</span>
<span class="t" style="left:558.89px;top:560.00px;font-size:16px;line-height:17px;color:#000;font-weight:bold;transform:scaleX(1.0077);">Notes :</span>
<span class="t" style="left:629.36px;top:560.00px;font-size:16px;line-height:17px;color:#000;font-style:italic;transform:scaleX(0.9606);">[--??--]</span>
<span class="t" style="left:535.62px;top:597.00px;font-size:16px;line-height:17px;color:#000;font-weight:bold;transform:scaleX(0.9787);">Is Active :</span>
<span class="t" style="left:629.36px;top:597.00px;font-size:16px;line-height:17px;color:#000;font-style:italic;transform:scaleX(0.9606);">[--??--]</span>
<span class="t" style="left:776.80px;top:371.00px;font-size:16px;line-height:17px;color:#000;font-weight:bold;">Date Of Birth :</span>
<span class="t" style="left:894.46px;top:371.00px;font-size:16px;line-height:17px;color:#000;font-style:italic;transform:scaleX(0.9585);">[--??--]</span>
<span class="t" style="left:813.68px;top:449.00px;font-size:16px;line-height:17px;color:#000;font-weight:bold;transform:scaleX(1.0175);">Diver ID :</span>
<span class="t" style="left:894.46px;top:449.00px;font-size:16px;line-height:17px;color:#000;font-style:italic;transform:scaleX(0.9585);">[--??--]</span>
<span class="t" style="left:757.19px;top:523.00px;font-size:16px;line-height:17px;color:#000;font-weight:bold;transform:scaleX(1.0064);">Expiration Date :</span>
<span class="t" style="left:894.46px;top:523.00px;font-size:16px;line-height:17px;color:#000;font-style:italic;transform:scaleX(0.9585);">[--??--]</span>
<span class="t" style="left:789.49px;top:597.00px;font-size:16px;line-height:17px;color:#000;font-weight:bold;transform:scaleX(1.0053);">Is Detained :</span>
<span class="t" style="left:894.46px;top:597.00px;font-size:16px;line-height:17px;color:#000;font-style:italic;transform:scaleX(0.9585);">[--??--]</span>
<span class="t" style="left:1156.54px;top:314.00px;font-size:15.6px;line-height:17px;color:#0000ff;transform:scaleX(0.9602);text-decoration:underline;">Edit Person</span>
<span class="t" style="left:474.25px;top:681.00px;font-size:12px;line-height:14px;color:#7d8995;transform:scaleX(1.0342);">ApplicationInfo</span>
<span class="t" style="left:479.49px;top:727.00px;font-size:18.67px;line-height:21px;color:#7d8995;font-weight:bold;transform:scaleX(1.0059);">I.L.Application ID :</span>
<span class="t" style="left:485.50px;top:767.00px;font-size:18.67px;line-height:21px;color:#7d8995;font-weight:bold;">Application Date :</span>
<span class="t" style="left:594.84px;top:801.00px;font-size:18.67px;line-height:21px;color:#7d8995;font-weight:bold;transform:scaleX(0.9138);">Fees :</span>
<span class="t" style="left:542.78px;top:839.00px;font-size:18.67px;line-height:21px;color:#7d8995;font-weight:bold;transform:scaleX(0.9682);">Issue Date :</span>
<span class="t" style="left:663.70px;top:727.00px;font-size:16px;line-height:17px;color:#7d8995;font-style:italic;transform:scaleX(0.7989);">??</span>
<span class="t" style="left:660.75px;top:767.00px;font-size:16px;line-height:17px;color:#7d8995;font-style:italic;transform:scaleX(1.0258);">06/06/2025</span>
<span class="t" style="left:660.50px;top:804.00px;font-size:16px;line-height:17px;color:#7d8995;font-style:italic;transform:scaleX(0.9407);">51.0000</span>
<span class="t" style="left:663.70px;top:842.00px;font-size:16px;line-height:17px;color:#7d8995;font-style:italic;transform:scaleX(0.7989);">??</span>
<span class="t" style="left:1012.69px;top:723.00px;font-size:18.67px;line-height:21px;color:#7d8995;font-weight:bold;transform:scaleX(1.0130);">I.L ID :</span>
<span class="t" style="left:919.05px;top:763.00px;font-size:18.67px;line-height:21px;color:#7d8995;font-weight:bold;transform:scaleX(0.9539);">Local License ID :</span>
<span class="t" style="left:920.59px;top:801.00px;font-size:18.67px;line-height:21px;color:#7d8995;font-weight:bold;transform:scaleX(1.0108);">Expiration Date :</span>
<span class="t" style="left:968.20px;top:837.00px;font-size:18.67px;line-height:21px;color:#7d8995;font-weight:bold;transform:scaleX(0.9758);">CreatedBy :</span>
<span class="t" style="left:1082.20px;top:729.00px;font-size:16px;line-height:17px;color:#7d8995;font-style:italic;transform:scaleX(0.7989);">??</span>
<span class="t" style="left:1082.20px;top:766.00px;font-size:16px;line-height:17px;color:#7d8995;font-style:italic;transform:scaleX(0.7989);">??</span>
<span class="t" style="left:1082.50px;top:805.00px;font-size:16px;line-height:17px;color:#7d8995;font-style:italic;transform:scaleX(1.0352);">06/06/2026</span>
<span class="t" style="left:1082.70px;top:841.00px;font-size:16px;line-height:17px;color:#7d8995;font-style:italic;transform:scaleX(0.9619);">nour1</span>
<span class="t" style="left:494.80px;top:922.00px;font-size:18.67px;line-height:21px;color:#fff;transform:scaleX(0.9467);">Close</span>
<span class="t" style="left:692.60px;top:921.00px;font-size:18.67px;line-height:21px;color:#404040;font-weight:bold;transform:scaleX(0.9605);">Show Liscense Info</span>
<span class="t" style="left:934.25px;top:921.00px;font-size:18.67px;line-height:21px;color:#0000ff;font-weight:bold;transform:scaleX(0.9705);text-decoration:underline;">Show License History</span>
<span class="t" style="left:1244.50px;top:922.00px;font-size:18.67px;line-height:21px;color:#8d8d8d;transform:scaleX(0.9016);">Save</span>
<!-- ===== watermark ===== -->
<svg class="a" style="left:830px;top:950px" width="260" height="130" viewBox="0 0 1921 960">
<defs><mask id="wmm"><rect x="0" y="0" width="1921" height="960" fill="#fff"/><circle cx="276" cy="405" r="82" fill="#000"/><circle cx="1655" cy="405" r="80" fill="#000"/><circle cx="675" cy="355" r="75" fill="#000"/></mask></defs>
<g opacity="0.068" mask="url(#wmm)"><g fill="#000">
<circle cx="276" cy="405" r="164"/>
<circle cx="1655" cy="405" r="160"/>
<circle cx="675" cy="355" r="150"/>
<rect x="362" y="68" width="78" height="410" rx="39"/>
<rect x="276" y="436" width="1380" height="79"/>
<circle cx="620" cy="120" r="51"/><circle cx="740" cy="120" r="51"/>
<circle cx="920" cy="222" r="51"/><circle cx="1040" cy="222" r="51"/>
<path d="M950 300 h90 l-30 140 h-90 z M1110 300 h90 l-30 140 h-90 z M1270 300 h90 l-30 140 h-90 z M1420 300 h90 l-10 140 h-90 z"/>
</g></g></svg>

<span class="t" style="left:843.19px;top:1023.00px;font-size:37.8px;line-height:42px;color:rgba(0,0,0,0.068);font-weight:bold;transform:scaleX(1.0025);">mostaql.com</span>
</body></html>
